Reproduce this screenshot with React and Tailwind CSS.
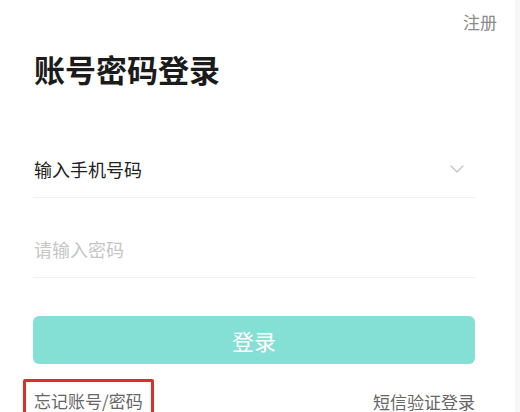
import { useState } from 'react';

const font = { fontFamily: '"Noto Sans CJK SC", "Noto Sans", sans-serif' };

const ChevronDown = () => (
  <svg width="14" height="8" viewBox="0 0 14 8" fill="none" className="mr-[11px]">
    <path d="M1 1l6 6 6-6" stroke="#c4c4c4" strokeWidth="1.3" strokeLinecap="round" strokeLinejoin="round" />
  </svg>
);

const App = () => {
  const [phone, setPhone] = useState('');
  const [password, setPassword] = useState('');

  return (
    <div className="flex w-[520px] h-[412px] overflow-hidden bg-white" style={font}>
      <div className="flex-1 flex flex-col">
        <div className="flex justify-end pt-[13px] pr-[18px]">
          <button className="text-[17px] leading-none text-[#8a8a8a]">注册</button>
        </div>

        <div className="pl-[33px] pr-[40px] flex flex-col">
          <h1 className="mt-[23px] text-[31px] font-bold leading-none text-[#1b1b1b] pl-[1px]">账号密码登录</h1>

          <div className="mt-[61px] h-[53px] pb-[4px] flex items-center justify-between border-b border-[#f0f0f0]">
            <input
              value={phone}
              onChange={(e) => setPhone(e.target.value)}
              placeholder="输入手机号码"
              className="flex-1 pl-[1px] text-[18px] leading-none outline-none bg-transparent text-[#222] placeholder-[#222]"
            />
            <ChevronDown />
          </div>

          <div className="mt-[27px] h-[53px] pb-[4px] flex items-center border-b border-[#f0f0f0]">
            <input
              type="password"
              value={password}
              onChange={(e) => setPassword(e.target.value)}
              placeholder="请输入密码"
              className="flex-1 pl-[1px] text-[18px] leading-none outline-none bg-transparent text-[#222] placeholder-[#c6c6c6]"
            />
          </div>

          <button className="mt-[38px] h-[48px] rounded-[6px] bg-[#84e0d5] text-white text-[22px] leading-none">
            登录
          </button>

          <div className="mt-[15px] flex items-start justify-between">
            <a className="-ml-[10px] border-[3px] border-[#d8302b] rounded-[2px] px-[8px] pt-[10px] pb-[8px] text-[17px] leading-none text-[#666]">
              忘记账号/密码
            </a>
            <a className="pt-[14px] text-[17px] leading-none text-[#666]">短信验证登录</a>
          </div>
        </div>
      </div>
      <div className="w-[5px] bg-[#f7f7f7]" />
    </div>
  );
};

export default App;
